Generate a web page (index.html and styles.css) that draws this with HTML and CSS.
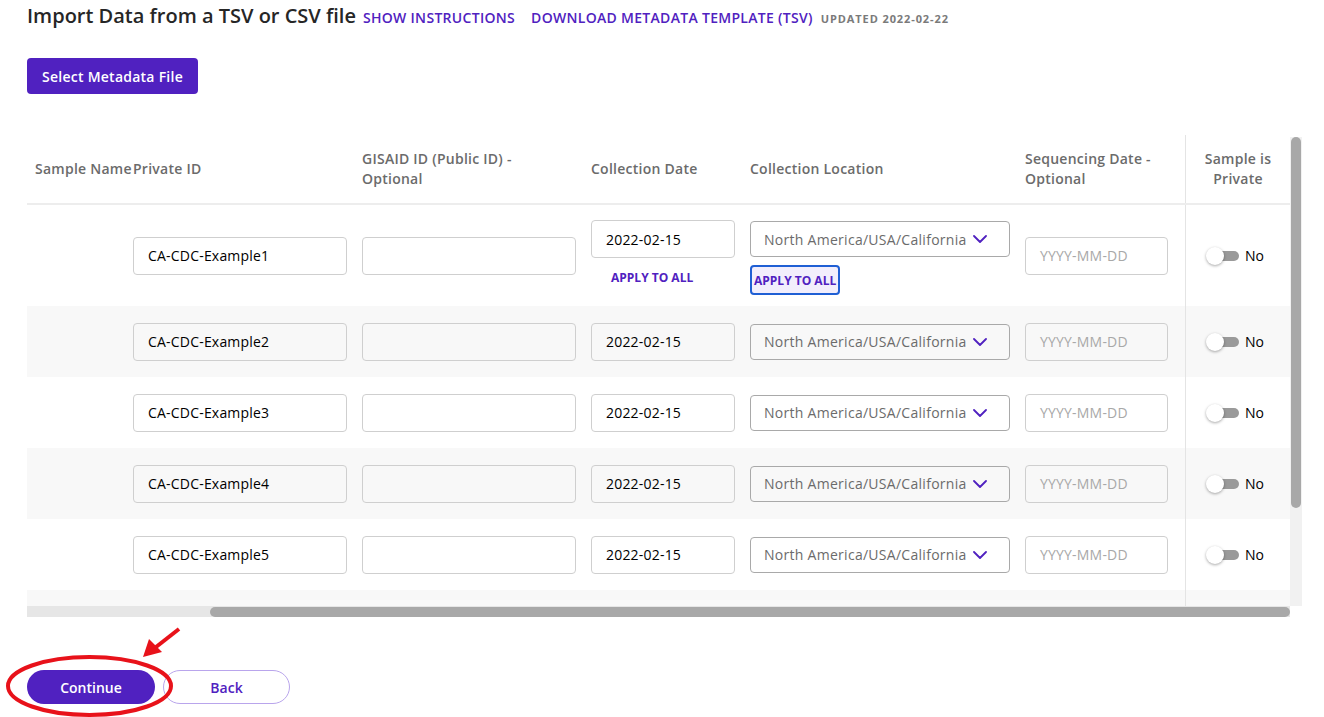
FILE: index.html
```html
<!DOCTYPE html>
<html lang="en">
<head>
<meta charset="utf-8">
<title>Import Data</title>
<link rel="stylesheet" href="styles.css">
</head>
<body>
<div class="page">
  <div class="title-row">
    <h1 class="title">Import Data from a TSV or CSV file</h1>
    <a class="link gap-sm">Show Instructions</a>
    <a class="link gap-lg">Download Metadata Template (TSV)</a>
    <span class="updated">Updated 2022-02-22</span>
  </div>
  <button class="select-btn">Select Metadata File</button>

  <div class="table-frame">
    <div class="viewport">
      <div class="row head">
        <div class="cell">Sample Name</div>
        <div class="cell">Private ID</div>
        <div class="cell">GISAID ID (Public ID) -<br>Optional</div>
        <div class="cell">Collection Date</div>
        <div class="cell">Collection Location</div>
        <div class="cell">Sequencing Date -<br>Optional</div>
        <div class="cell private">Sample is<br>Private</div>
      </div>

      <div class="row first">
        <div class="cell"></div>
        <div class="cell"><div class="input w214">CA-CDC-Example1</div></div>
        <div class="cell"><div class="input w214"></div></div>
        <div class="cell stack date-stack">
          <div class="input w144">2022-02-15</div>
          <button class="apply">Apply to all</button>
        </div>
        <div class="cell stack loc-stack">
          <div class="select"><span>North America/USA/California</span><svg class="chev" viewBox="0 0 14 8" width="14" height="8"><path d="M1 1l6 6 6-6" fill="none" stroke="#5021c0" stroke-width="1.8" stroke-linecap="round" stroke-linejoin="round"/></svg></div>
          <button class="apply focused">Apply to all</button>
        </div>
        <div class="cell"><div class="input w143 ph">YYYY-MM-DD</div></div>
        <div class="cell private"><div class="toggle"><span class="switch"><span class="knob"></span></span><span>No</span></div></div>
      </div>

      <div class="row grey">
        <div class="cell"></div>
        <div class="cell"><div class="input w214">CA-CDC-Example2</div></div>
        <div class="cell"><div class="input w214"></div></div>
        <div class="cell"><div class="input w144">2022-02-15</div></div>
        <div class="cell"><div class="select"><span>North America/USA/California</span><svg class="chev" viewBox="0 0 14 8" width="14" height="8"><path d="M1 1l6 6 6-6" fill="none" stroke="#5021c0" stroke-width="1.8" stroke-linecap="round" stroke-linejoin="round"/></svg></div></div>
        <div class="cell"><div class="input w143 ph">YYYY-MM-DD</div></div>
        <div class="cell private"><div class="toggle"><span class="switch"><span class="knob"></span></span><span>No</span></div></div>
      </div>

      <div class="row">
        <div class="cell"></div>
        <div class="cell"><div class="input w214">CA-CDC-Example3</div></div>
        <div class="cell"><div class="input w214"></div></div>
        <div class="cell"><div class="input w144">2022-02-15</div></div>
        <div class="cell"><div class="select"><span>North America/USA/California</span><svg class="chev" viewBox="0 0 14 8" width="14" height="8"><path d="M1 1l6 6 6-6" fill="none" stroke="#5021c0" stroke-width="1.8" stroke-linecap="round" stroke-linejoin="round"/></svg></div></div>
        <div class="cell"><div class="input w143 ph">YYYY-MM-DD</div></div>
        <div class="cell private"><div class="toggle"><span class="switch"><span class="knob"></span></span><span>No</span></div></div>
      </div>

      <div class="row grey">
        <div class="cell"></div>
        <div class="cell"><div class="input w214">CA-CDC-Example4</div></div>
        <div class="cell"><div class="input w214"></div></div>
        <div class="cell"><div class="input w144">2022-02-15</div></div>
        <div class="cell"><div class="select"><span>North America/USA/California</span><svg class="chev" viewBox="0 0 14 8" width="14" height="8"><path d="M1 1l6 6 6-6" fill="none" stroke="#5021c0" stroke-width="1.8" stroke-linecap="round" stroke-linejoin="round"/></svg></div></div>
        <div class="cell"><div class="input w143 ph">YYYY-MM-DD</div></div>
        <div class="cell private"><div class="toggle"><span class="switch"><span class="knob"></span></span><span>No</span></div></div>
      </div>

      <div class="row">
        <div class="cell"></div>
        <div class="cell"><div class="input w214">CA-CDC-Example5</div></div>
        <div class="cell"><div class="input w214"></div></div>
        <div class="cell"><div class="input w144">2022-02-15</div></div>
        <div class="cell"><div class="select"><span>North America/USA/California</span><svg class="chev" viewBox="0 0 14 8" width="14" height="8"><path d="M1 1l6 6 6-6" fill="none" stroke="#5021c0" stroke-width="1.8" stroke-linecap="round" stroke-linejoin="round"/></svg></div></div>
        <div class="cell"><div class="input w143 ph">YYYY-MM-DD</div></div>
        <div class="cell private"><div class="toggle"><span class="switch"><span class="knob"></span></span><span>No</span></div></div>
      </div>

      <div class="row grey">
        <div class="cell"></div>
        <div class="cell"><div class="input w214"></div></div>
        <div class="cell"><div class="input w214"></div></div>
        <div class="cell"><div class="input w144"></div></div>
        <div class="cell"><div class="select"></div></div>
        <div class="cell"><div class="input w143"></div></div>
        <div class="cell private"></div>
      </div>
    </div>
    <div class="vscroll"><div class="vthumb"></div></div>
    <div class="hscroll"><div class="hthumb"></div></div>
    <div class="corner"></div>
  </div>

  <div class="actions">
    <button class="pill primary">Continue</button>
    <button class="pill secondary">Back</button>
  </div>

  <svg class="annotation" width="200" height="100" viewBox="0 0 200 100">
    <ellipse cx="89.5" cy="66" rx="81.5" ry="29" fill="none" stroke="#e8121a" stroke-width="4"/>
    <line x1="179" y1="9" x2="156" y2="27" stroke="#e8121a" stroke-width="4"/>
    <polygon points="143,37 149,19 162,32" fill="#e8121a"/>
  </svg>
</div>
</body>
</html>
```

FILE: styles.css
```css
* { box-sizing: border-box; }

body {
  margin: 0;
  font-family: "Open Sans", "Noto Sans", sans-serif;
  color: #000;
  background: #fff;
}

.page {
  position: relative;
  width: 1324px;
  height: 717px;
  overflow: hidden;
  padding-left: 27px;
}

.title-row {
  display: flex;
  align-items: baseline;
  padding-top: 2px;
  height: 30px;
}

.title {
  margin: 0;
  font-size: 20px;
  line-height: 28px;
  font-weight: 600;
  color: #262626;
  white-space: nowrap;
}

.link {
  font-size: 14px;
  font-weight: 600;
  letter-spacing: 0.3px;
  text-transform: uppercase;
  color: #5021c0;
  white-space: nowrap;
}
.gap-sm { margin-left: 7px; }
.gap-lg { margin-left: 16px; }

.updated {
  margin-left: 8px;
  font-size: 11px;
  font-weight: 700;
  letter-spacing: 0.9px;
  text-transform: uppercase;
  color: #7a7a7a;
  white-space: nowrap;
}

.select-btn {
  display: block;
  margin-top: 28px;
  height: 36px;
  width: 171px;
  padding: 0;
  border: none;
  border-radius: 4px;
  background: #5021c0;
  color: #fff;
  font-family: inherit;
  font-size: 14px;
  font-weight: 600;
  letter-spacing: 0.25px;
}

.table-frame {
  margin-top: 41px;
  display: grid;
  grid-template-columns: 1263px 12px;
  grid-template-rows: 471px 11px;
}

.viewport {
  overflow: hidden;
  grid-column: 1 / 3;
  grid-row: 1;
}

.row {
  display: grid;
  grid-template-columns: 106px 229px 229px 159px 275px 160px 105px;
  height: 71px;
  background: #fff;
}
.row.grey { background: #f8f8f8; }
.row.first { height: 101px; }

.row.head {
  height: 70px;
  border-bottom: 2px solid #ededed;
}
.row.head .cell {
  font-size: 14px;
  line-height: 20px;
  font-weight: 600;
  letter-spacing: 0.25px;
  color: #6b6b6b;
  white-space: nowrap;
}
.row.head .cell:first-child { padding-left: 8px; }
.row.head .cell.private { text-align: center; justify-content: center; }

.cell {
  display: flex;
  align-items: center;
  min-width: 0;
}
.cell.private {
  border-left: 1px solid #e4e4e4;
  justify-content: center;
}

.stack {
  flex-direction: column;
  align-items: flex-start;
  justify-content: flex-start;
}
.date-stack { padding-top: 15px; }
.loc-stack { padding-top: 16px; }

.input {
  height: 38px;
  border: 1px solid #cfcfcf;
  border-radius: 4px;
  padding: 0 14px;
  display: flex;
  align-items: center;
  font-size: 14px;
  letter-spacing: 0.2px;
  color: #000;
  background: transparent;
  white-space: nowrap;
}
.row.first .input { background: #fff; }
.w214 { width: 214px; }
.w144 { width: 144px; }
.w143 { width: 143px; }
.input.ph { color: #a8a8a8; }

.select {
  width: 260px;
  height: 36px;
  border: 1px solid #a9a9a9;
  border-radius: 4px;
  padding: 0 22px 0 13px;
  display: flex;
  align-items: center;
  justify-content: space-between;
  font-size: 14px;
  letter-spacing: 0.28px;
  color: #6b6b6b;
  white-space: nowrap;
}
.chev { flex: none; }

.apply {
  font-family: inherit;
  font-size: 12px;
  font-weight: 700;
  text-transform: uppercase;
  color: #5021c0;
  background: none;
  border: none;
  white-space: nowrap;
}
.date-stack .apply {
  margin-top: 9px;
  height: 20px;
  padding: 0 0 0 20px;
}
.apply.focused {
  margin-top: 8px;
  height: 30px;
  width: 90px;
  padding: 0 0 0 2px;
  text-align: left;
  border: 2px solid #1f5fd4;
  border-radius: 4px;
  background: #f2eefc;
}

.toggle {
  display: flex;
  align-items: center;
  gap: 6px;
  font-size: 14px;
  margin-right: 6px;
}
.switch {
  position: relative;
  width: 33px;
  height: 18px;
  display: flex;
  align-items: center;
}
.switch::before {
  content: "";
  margin-left: 2px;
  width: 31px;
  height: 10px;
  border-radius: 5px;
  background: #9a9a9a;
}
.knob {
  position: absolute;
  left: 0;
  top: 0;
  width: 18px;
  height: 18px;
  border-radius: 50%;
  background: #fff;
  box-shadow: 0 1px 3px rgba(0, 0, 0, 0.35);
}

.vscroll {
  grid-column: 2;
  grid-row: 1;
  z-index: 1;
  padding: 2px 1px 0 1px;
  background: linear-gradient(#fff, #fff) no-repeat top / 100% 2px, #f1f1f1;
}
.vthumb {
  width: 10px;
  height: 371px;
  border-radius: 5px;
  background: #a8a8a8;
}

.hscroll {
  grid-column: 1;
  grid-row: 2;
  background: #e6e6e6;
  padding: 1px 0 0 183px;
}
.hthumb {
  height: 10px;
  border-radius: 5px;
  background: #a8a8a8;
}
.corner {
  grid-column: 2;
  grid-row: 2;
  background: #fff;
}

.actions {
  margin-top: 53px;
  display: flex;
  gap: 8px;
}
.pill {
  height: 34px;
  border-radius: 17px;
  font-family: inherit;
  font-size: 14px;
  font-weight: 600;
  padding: 0;
}
.pill.primary {
  width: 128px;
  background: #5021c0;
  border: none;
  color: #fff;
}
.pill.secondary {
  width: 127px;
  background: #fff;
  border: 1px solid #b9a5ec;
  color: #5021c0;
}

.annotation {
  position: absolute;
  left: 0;
  top: 620px;
}
```
